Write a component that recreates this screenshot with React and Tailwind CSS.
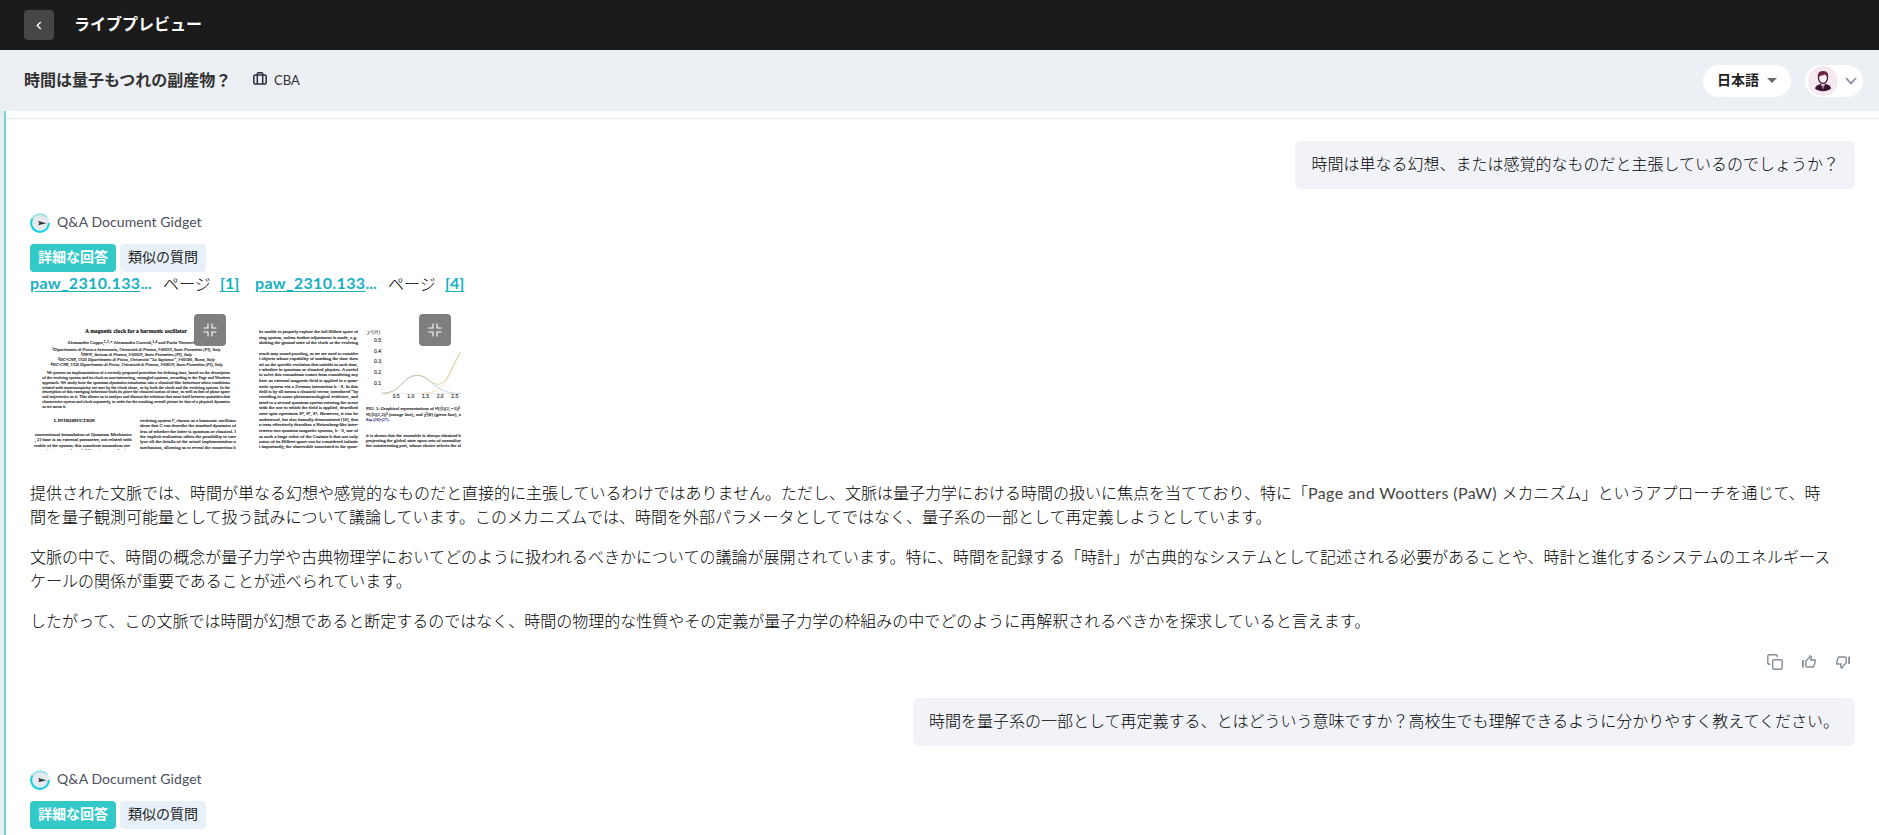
import clsx from "clsx";

const abstractLines = [
  "We present an implementation of a recently proposed procedure for defining time, based on the description",
  "of the evolving system and its clock as non-interacting, entangled systems, according to the Page and Wootters",
  "approach. We study how the quantum dynamics transforms into a classical-like behaviour when conditions",
  "related with macroscopicity are met by the clock alone, or by both the clock and the evolving system. In the",
  "description of this emerging behaviour finds its place the classical notion of time, as well as that of phase space",
  "and trajectories on it. This allows us to analyze and discuss the relations that must hold between quantities that",
  "characterize system and clock separately, in order for the resulting overall picture be that of a physical dynamics",
];

const columnLines = [
  [99, "be unable to properly explore the full Hilbert space of"],
  [117, "ring system, unless further adjustment is made, e.g.", 336],
  [133, "shifting the ground state of the clock or the evolving"],
  [164, "result may sound puzzling, as we are used to consider"],
  [180, "t objects whose capability of marking the time does"],
  [197, "nd on the specific evolution that unfolds in such time,"],
  [213, "r whether in quantum or classical physics. A useful"],
  [228, "to solve this conundrum comes from considering any"],
  [246, "here an external magnetic field is applied to a quan-"],
  [264, "netic system via a Zeeman interaction b · S. In this"],
  [280, "field is by all means a classical vector, introduced “by"],
  [295, "ccording to some phenomenological evidence, and"],
  [312, "iated to a second quantum system entering the scene"],
  [328, "with the one to which the field is applied, described"],
  [346, "oree spin operators Sˣ, Sʸ, Sᶻ. However, it can be"],
  [362, "understood, but also formally demonstrated [16], that"],
  [379, "n term effectively describes a Heisenberg-like inter-"],
  [397, "etween two quantum magnetic systems, h · S, one of"],
  [413, "m such a large value of the Casimir h that not only"],
  [430, "nsion of its Hilbert space can be considered infinite"],
  [445, "t importantly, the observable associated to the quan-"],
];

function Line({ x, y, w, size = 14, children, ...rest }) {
  return (
    <text x={x} y={y} textLength={w} lengthAdjust="spacingAndGlyphs" fontSize={size} {...rest}>
      {children}
    </text>
  );
}

function FirstPage() {
  return (
    <svg
      viewBox="42 0 606 450"
      className="block h-[150px] w-[202px] font-['Liberation_Serif',serif]"
      fill="#111"
      stroke="#111"
      strokeWidth="0.4"
    >
      <Line x={195} y={99} w={306} size={17} fontWeight="bold">A magnetic clock for a harmonic oscillator</Line>
      <Line x={142} y={132} w={412}>Alessandro Coppo,¹˒²˒* Alessandro Cuccoli,³˒⁴ and Paola Verrucchi²˒³˒⁴</Line>
      <g fontStyle="italic">
        <Line x={97} y={153} w={504}>¹Dipartimento di Fisica e Astronomia, Università di Firenze, I-50019, Sesto Fiorentino (FI), Italy</Line>
        <Line x={182} y={168} w={334}>²INFN, Sezione di Firenze, I-50019, Sesto Fiorentino (FI), Italy</Line>
        <Line x={114} y={183} w={470}>³ISC-CNR, UOS Dipartimento di Fisica, Università “La Sapienza”, I-00185, Rome, Italy</Line>
        <Line x={92} y={198} w={516}>⁴ISC-CNR, UOS Dipartimento di Fisica, Università di Firenze, I-50019, Sesto Fiorentino (FI), Italy</Line>
      </g>
      {abstractLines.map((line, i) => (
        <Line key={line} x={i ? 67 : 80} y={222 + i * 14.6} w={i ? 563 : 550}>{line}</Line>
      ))}
      <Line x={67} y={324} w={72}>as we mean it.</Line>
      <Line x={101} y={366} w={124} fontWeight="bold">I. INTRODUCTION</Line>
      <Line x={44} y={408} w={291}>conventional formulation of Quantum Mechanics</Line>
      <Line x={44} y={424} w={291}>, 2] time is an external parameter, not related with</Line>
      <Line x={42} y={441} w={290}>rvable of the system; this somehow anomalous sta-</Line>
      <Line x={44} y={456} w={290}>gave rise to a number of different proposals aim-</Line>
      <Line x={360} y={366} w={288}>evolving system Γ, chosen as a harmonic oscillator</Line>
      <Line x={360} y={381} w={288}>show that C can describe the standard dynamics of</Line>
      <Line x={360} y={399} w={288}>less of whether the latter is quantum or classical. I</Line>
      <Line x={360} y={414} w={288}>the explicit realization offers the possibility to care</Line>
      <Line x={360} y={430} w={288}>lyze all the details of the actual implementation o</Line>
      <Line x={360} y={446} w={288}>mechanism, allowing us to reveal the connection b</Line>
    </svg>
  );
}

function FourthPage() {
  return (
    <svg
      viewBox="42 0 606 450"
      className="block h-[150px] w-[202px] font-['Liberation_Serif',serif]"
      fill="#111"
      stroke="#111"
      strokeWidth="0.4"
    >
      {columnLines.map(([y, line, end = 339]) => (
        <Line key={y} x={42} y={y} w={end - 42}>{line}</Line>
      ))}
      <Line x={366} y={102} w={40} size={17} fontStyle="italic" fill="#555" stroke="none">χ²(θ)</Line>
      <g className="font-['Liberation_Sans',sans-serif]" fill="#444" fontSize="15">
        {["0.5", "0.4", "0.3", "0.2", "0.1"].map((tick, i) => (
          <text key={tick} x="387" y={126 + i * 32}>{tick}</text>
        ))}
        {["0.5", "1.0", "1.5", "2.0", "2.5"].map((tick, i) => (
          <text key={tick} x={443 + i * 44} y="294">{tick}</text>
        ))}
      </g>
      <g fill="none" strokeWidth="1.8">
        <path d="M410 112V280H648" stroke="#ddd" />
        <path d="M412 280C465 282 475 226 516 226C555 226 565 280 648 281" stroke="#9eb8d6" />
        <path d="M530 280C610 280 605 225 648 156" stroke="#eccb8c" />
        <path d="M412 280C465 282 475 226 516 226C548 226 560 254 580 253C608 250 618 200 648 156" stroke="#b4bf78" />
      </g>
      <Line x={363} y={330} w={282}>FIG. 1: Graphical representations of ½|⟨1|(2, −1)|²</Line>
      <Line x={363} y={347} w={285}>½|⟨1|(2,2)|² (orange line), and χ²(θ) (green line), a</Line>
      <Line x={363} y={363} w={70} fill="#2b39d8">Eqs.(26)-(27).</Line>
      <Line x={363} y={411} w={285}>it is shown that the ensemble is always obtained b</Line>
      <Line x={363} y={426} w={285}>projecting the global state upon sets of normalize</Line>
      <Line x={363} y={441} w={285}>the uninteresting part, whose choice selects the al</Line>
    </svg>
  );
}

function GidgetLogo() {
  return (
    <svg viewBox="0 0 20 20" className="size-5" fill="none">
      <circle cx="10" cy="10" r="9.8" fill="#e6e9ee" />
      <path d="M2.4 5.6A9 9 0 0 1 17 4.4" stroke="#8fe3e8" strokeWidth="1.6" />
      <path d="M2.4 5.6A8.8 8.8 0 1 0 18.8 10" stroke="#12d3dc" strokeWidth="2" />
      <path d="M8 8L16.4 10.2L8 12.2L9.4 10.2Z" fill="#333" />
    </svg>
  );
}

function Source({ page, children }) {
  return (
    <div className="w-[225px]">
      <div className="-mt-px flex h-6 items-center font-light leading-6 text-black">
        <a className="w-[123px] whitespace-nowrap font-['Lato','Noto_Sans_CJK_JP',sans-serif] text-base font-bold text-[#16b1c4]">
          <span className="tracking-[0.35px] underline underline-offset-2">paw_2310.133</span>
          <span>...</span>
        </a>
        <span className="ml-[10px] w-12">ページ</span>
        <a className="ml-[9px] font-['Lato',sans-serif] font-bold text-[#16b1c4] underline underline-offset-2">
          [{page}]
        </a>
      </div>
      <div className="relative ml-1 mt-[5px] w-[202px]">
        {children}
        <div className="absolute right-[10px] top-[14px] flex size-8 items-center justify-center rounded bg-[#7f7f7f]">
          <svg viewBox="0 0 14 14" className="size-3.5" fill="none" stroke="#fff" strokeWidth="1.1">
            <path d="M5 0.5V5H0.5M9 0.5V5H13.5M5 13.5V9H0.5M9 13.5V9H13.5" />
          </svg>
        </div>
      </div>
    </div>
  );
}

function Question({ children }) {
  return (
    <div className="flex justify-end">
      <div className="h-12 whitespace-nowrap rounded-md bg-[#f2f3f8] px-4 pt-2.5 font-light leading-6 text-black">
        {children}
      </div>
    </div>
  );
}

function AnswerHead() {
  return (
    <div className="ml-6 mt-6">
      <div className="flex h-5 items-center gap-[7px]">
        <GidgetLogo />
        <span className="pb-0.5 font-['Lato',sans-serif] text-sm tracking-[0.08px] text-[#4b4f5e]">
          Q&amp;A Document Gidget
        </span>
      </div>
      <div className="mt-[11px] flex gap-1 text-sm">
        <button className="h-7 w-[86px] rounded bg-[#33c9c9] pb-1 font-bold text-white">詳細な回答</button>
        <button className="h-7 w-[86px] rounded bg-[#e8f1f9] pb-1 text-[#222]">類似の質問</button>
      </div>
      <div className="flex">
        <Source page={1}>
          <FirstPage />
        </Source>
        <Source page={4}>
          <FourthPage />
        </Source>
      </div>
    </div>
  );
}

function Thumb({ className }) {
  return (
    <svg viewBox="0 0 16 16" className={clsx("size-4", className)} fill="none" stroke="#858c94" strokeWidth="1.4">
      <path d="M1.9 6V13.6" strokeWidth="1.8" />
      <path d="M4.8 7L8.2 3.8L8.8 1.9C10.3 2 10.7 3.2 10.2 4.6L9.8 6H14.3L13.9 9.2L12.4 13H6L4.8 12.2Z" strokeLinejoin="round" />
    </svg>
  );
}

function Avatar() {
  return (
    <svg viewBox="0 0 30 30" className="size-[30px]">
      <circle cx="15" cy="15" r="15" fill="#f5e9f0" />
      <path d="M7 22.5C8 19 11 18.5 13 18L15 20L17 18C20 18.5 22.5 19 23 22.5C19 26 11 26 7 22.5Z" fill="#3b1230" />
      <path d="M13.2 18.5L15 24L16.8 18.5Z" fill="#f7dfe8" />
      <path d="M15 19.5V24" stroke="#3b1230" strokeWidth="1" />
      <ellipse cx="15" cy="11.8" rx="4.5" ry="5.6" fill="#fbeef3" stroke="#3b1230" strokeWidth="1.2" />
      <path d="M10 12C8.8 7.5 11.5 4.7 15 4.9C19.5 4.7 21 8 20 12C19.2 9.8 18 9.4 16.5 8.6C14.5 10 11 9.2 10 12Z" fill="#6d2743" />
    </svg>
  );
}

export default function App() {
  return (
    <main className="flex h-screen flex-col overflow-hidden bg-white font-['Noto_Sans_CJK_JP',sans-serif] text-base text-[#222]">
      {/* Preview bar */}
      <header className="flex h-[50px] shrink-0 items-center bg-[#1b1b1b] pl-6 text-white">
        <button className="flex size-[30px] items-center justify-center rounded bg-[#464646]">
          <svg viewBox="0 0 8 10" className="h-[9px] w-2" fill="none" stroke="currentColor" strokeWidth="1.5">
            <path d="M6 1L2 5L6 9" />
          </svg>
        </button>
        <h1 className="ml-5 pb-1 font-bold">ライブプレビュー</h1>
      </header>

      {/* Document bar */}
      <div className="flex h-[61px] shrink-0 items-center bg-[#eceff3] pl-6 pr-4">
        <h2 className="w-[208px] whitespace-nowrap pb-1 font-bold text-[#333]">時間は量子もつれの副産物？</h2>
        <svg viewBox="0 0 14 13" className="mb-1 ml-[21px] h-[13px] w-3.5" fill="none" stroke="#2a3040" strokeWidth="1.5">
          <rect x="0.8" y="3" width="12.4" height="9" rx="1.5" />
          <path d="M4.3 12V1.8Q4.3 0.8 5.3 0.8H8.7Q9.7 0.8 9.7 1.8V12" />
        </svg>
        <span className="ml-[7px] font-['Lato',sans-serif] text-[13px] text-[#333]">CBA</span>
        <div className="ml-auto flex h-8 w-22 items-center rounded-full bg-white pl-3.5">
          <span className="pb-1 text-sm font-bold">日本語</span>
          <svg viewBox="0 0 10 5" className="ml-2 h-[5px] w-2.5" fill="#6a6a6a">
            <path d="M0 0H10L5 5Z" />
          </svg>
        </div>
        <div className="ml-3.5 flex h-8 w-[58px] items-center rounded-full bg-white pl-[3px]">
          <Avatar />
          <svg viewBox="0 0 12 8" className="ml-[7px] h-2 w-3" fill="none" stroke="#858e99" strokeWidth="1.8">
            <path d="M1 1L6 6.5L11 1" />
          </svg>
        </div>
      </div>

      {/* Chat */}
      <div className="flex min-h-0 grow">
        <div className="w-1 shrink-0 bg-[#e9edf2]" />
        <div className="min-w-0 grow overflow-hidden border-l-2 border-[#70d7cd] pr-6">
          <div className="-mr-6 h-2 border-b border-[#e4e7ea] bg-[#fcfdfe]" />
          <div className="mt-[22px]">
            <Question>時間は単なる幻想、または感覚的なものだと主張しているのでしょうか？</Question>
            <AnswerHead />
          </div>

          <div className="ml-6 mt-[30px] space-y-4 whitespace-nowrap font-light leading-6 text-black">
            <p>
              提供された文脈では、時間が単なる幻想や感覚的なものだと直接的に主張しているわけではありません。ただし、文脈は量子力学における時間の扱いに焦点を当てており、特に「
              <span className="font-['Lato',sans-serif] font-normal leading-none tracking-[0.4px] text-[#444]">Page and Wootters (PaW) </span>
              メカニズム」というアプローチを通じて、時
              <br />
              間を量子観測可能量として扱う試みについて議論しています。このメカニズムでは、時間を外部パラメータとしてではなく、量子系の一部として再定義しようとしています。
            </p>
            <p>
              文脈の中で、時間の概念が量子力学や古典物理学においてどのように扱われるべきかについての議論が展開されています。特に、時間を記録する「時計」が古典的なシステムとして記述される必要があることや、時計と進化するシステムのエネルギース
              <br />
              ケールの関係が重要であることが述べられています。
            </p>
            <p>
              したがって、この文脈では時間が幻想であると断定するのではなく、時間の物理的な性質やその定義が量子力学の枠組みの中でどのように再解釈されるべきかを探求していると言えます。
            </p>
          </div>

          <div className="mr-1 mt-[22px] flex h-4 items-center justify-end gap-[18px]">
            <svg viewBox="0 0 16 16" className="size-4" fill="none" stroke="#858c94" strokeWidth="1.4">
              <rect x="5.7" y="5.7" width="9.5" height="9.5" rx="1.5" />
              <path d="M3.2 10.3H2.3Q0.8 10.3 0.8 8.8V2.3Q0.8 0.8 2.3 0.8H8.8Q10.3 0.8 10.3 2.3V3.2" />
            </svg>
            <Thumb />
            <Thumb className="rotate-180" />
          </div>

          <div className="mt-7">
            <Question>時間を量子系の一部として再定義する、とはどういう意味ですか？高校生でも理解できるように分かりやすく教えてください。</Question>
            <AnswerHead />
          </div>
        </div>
      </div>
    </main>
  );
}
